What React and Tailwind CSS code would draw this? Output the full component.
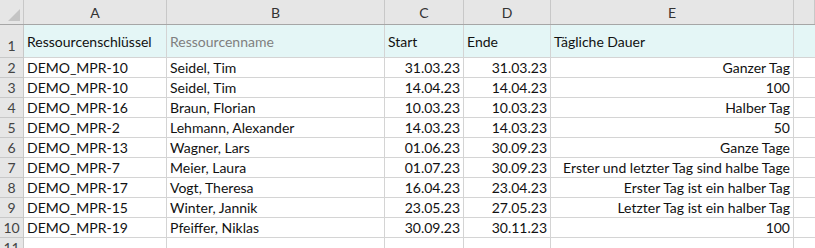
import React from 'react';

const rows = [
  ['DEMO_MPR-10', 'Seidel, Tim', '31.03.23', '31.03.23', 'Ganzer Tag'],
  ['DEMO_MPR-10', 'Seidel, Tim', '14.04.23', '14.04.23', '100'],
  ['DEMO_MPR-16', 'Braun, Florian', '10.03.23', '10.03.23', 'Halber Tag'],
  ['DEMO_MPR-2', 'Lehmann, Alexander', '14.03.23', '14.03.23', '50'],
  ['DEMO_MPR-13', 'Wagner, Lars', '01.06.23', '30.09.23', 'Ganze Tage'],
  ['DEMO_MPR-7', 'Meier, Laura', '01.07.23', '30.09.23', 'Erster und letzter Tag sind halbe Tage'],
  ['DEMO_MPR-17', 'Vogt, Theresa', '16.04.23', '23.04.23', 'Erster Tag ist ein halber Tag'],
  ['DEMO_MPR-15', 'Winter, Jannik', '23.05.23', '27.05.23', 'Letzter Tag ist ein halber Tag'],
  ['DEMO_MPR-19', 'Pfeiffer, Niklas', '30.09.23', '30.11.23', '100'],
];

const cols = 'grid-cols-[24px_143px_218px_79px_87px_243px_1fr]';
const cell = 'border-r border-b border-[#d4d4d4] px-[3px] whitespace-nowrap overflow-hidden';
const rowHead = 'bg-[#e6e6e6] border-r border-b border-[#c8c8c8] text-[#444] text-center';

export default function App() {
  return (
    <div
      className="w-[815px] h-[248px] overflow-hidden bg-white text-[14px] text-[#111]"
      style={{ fontFamily: 'Lato, "Open Sans", sans-serif' }}
    >
      {/* column header */}
      <div className={`grid ${cols} h-[25px] bg-[#e6e6e6] border-b border-[#a6a6a6]`}>
        <div className="relative border-r border-[#c8c8c8]">
          <div className="absolute right-[3px] bottom-[3px] w-0 h-0 border-l-[12px] border-l-transparent border-b-[12px] border-b-[#c4c4c4]" />
        </div>
        {['A', 'B', 'C', 'D', 'E', ''].map((c, i) => (
          <div key={i} className="border-r border-[#c8c8c8] flex items-center justify-center text-[#333]">
            {c}
          </div>
        ))}
      </div>

      {/* row 1: titles */}
      <div className={`grid ${cols} h-[33px]`}>
        <div className={`${rowHead} flex items-end justify-center pb-[1px]`}>1</div>
        <div className={`${cell} bg-[#e4f6f6] flex items-center`}>Ressourcenschlüssel</div>
        <div className={`${cell} bg-[#e4f6f6] flex items-center text-[#7f7f7f]`}>Ressourcenname</div>
        <div className={`${cell} bg-[#e4f6f6] flex items-center`}>Start</div>
        <div className={`${cell} bg-[#e4f6f6] flex items-center`}>Ende</div>
        <div className={`${cell} bg-[#e4f6f6] flex items-center`}>Tägliche Dauer</div>
        <div className="bg-[#e4f6f6] border-b border-[#d4d4d4]" />
      </div>

      {rows.map((r, i) => (
        <div key={i} className={`grid ${cols} h-[20px] leading-[19px]`}>
          <div className={rowHead}>{i + 2}</div>
          <div className={cell}>{r[0]}</div>
          <div className={cell}>{r[1]}</div>
          <div className={`${cell} text-right`}>{r[2]}</div>
          <div className={`${cell} text-right`}>{r[3]}</div>
          <div className={`${cell} text-right`}>{r[4]}</div>
          <div className="border-b border-[#d4d4d4]" />
        </div>
      ))}

      <div className={`grid ${cols} h-[20px] leading-[19px]`}>
        <div className={rowHead}>11</div>
        <div className={cell} />
        <div className={cell} />
        <div className={cell} />
        <div className={cell} />
        <div className={cell} />
        <div className="border-b border-[#d4d4d4]" />
      </div>
    </div>
  );
}
